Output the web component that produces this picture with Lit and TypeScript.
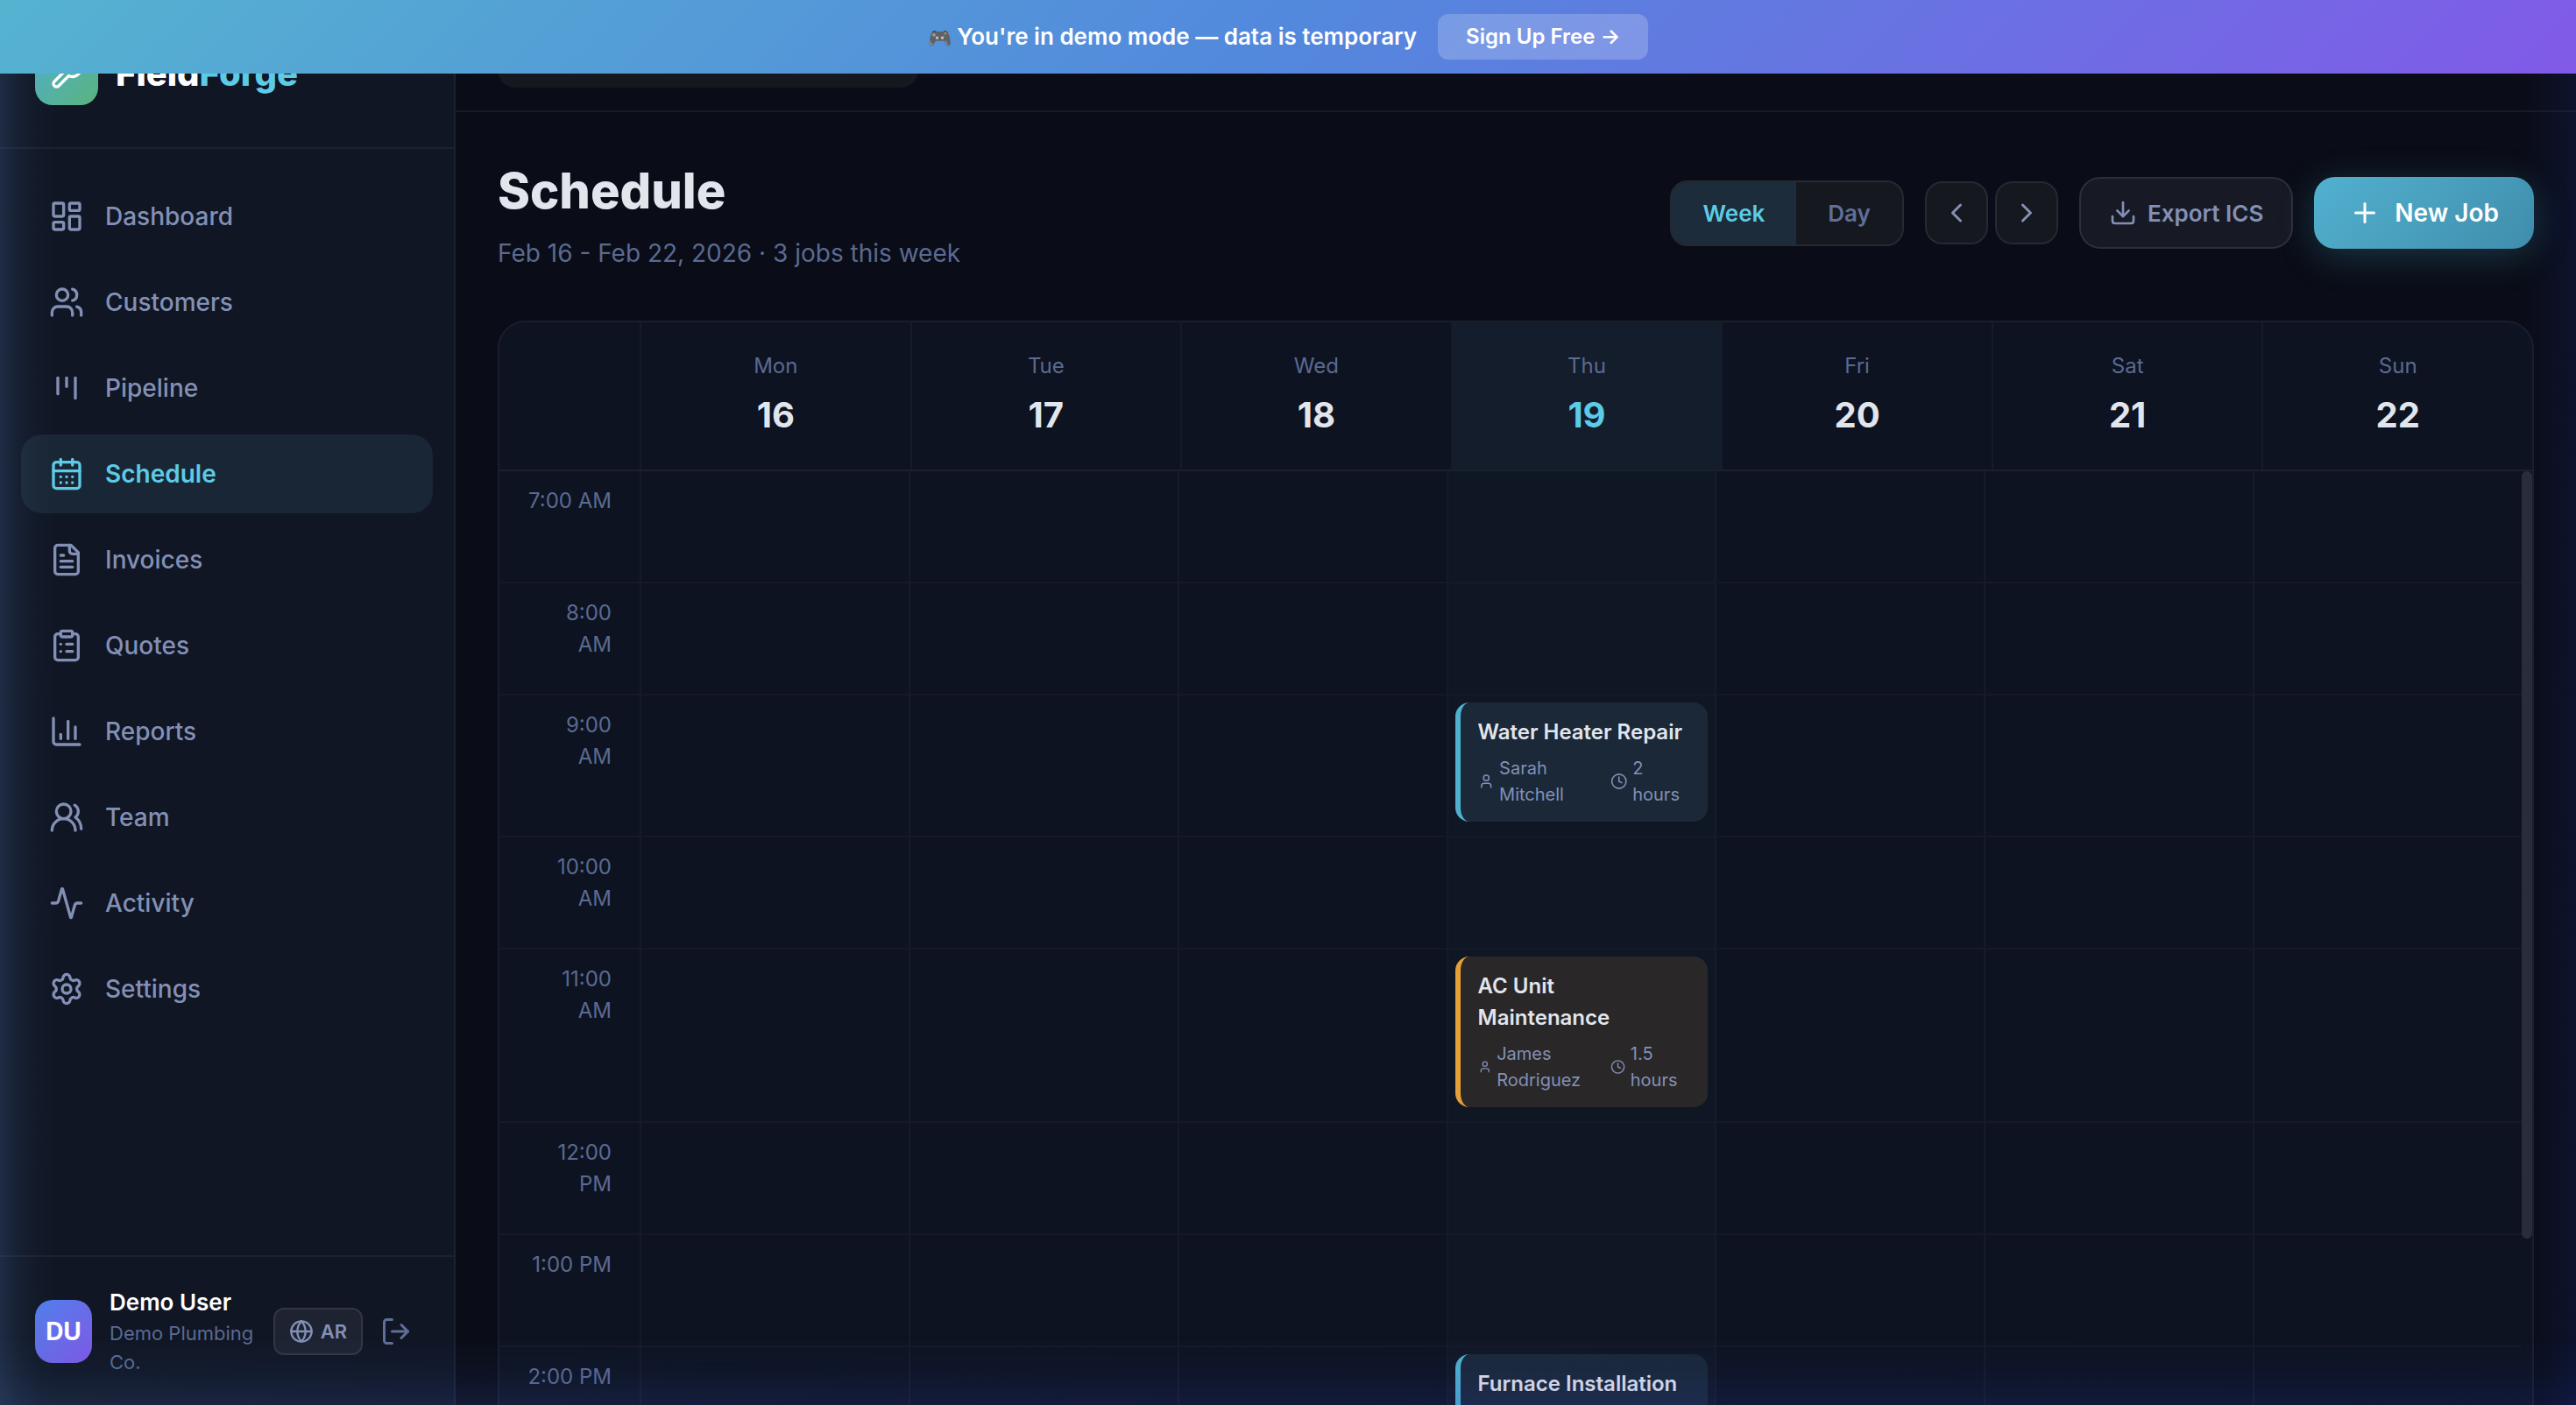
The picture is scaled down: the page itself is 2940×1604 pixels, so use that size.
import { LitElement, html, css, svg } from "lit";
import { customElement, property } from "lit/decorators.js";

const ICONS: Record<string, unknown> = {
  dashboard: svg`<rect width="7" height="9" x="3" y="3" rx="1"/><rect width="7" height="5" x="14" y="3" rx="1"/><rect width="7" height="9" x="14" y="12" rx="1"/><rect width="7" height="5" x="3" y="16" rx="1"/>`,
  customers: svg`<path d="M16 21v-2a4 4 0 0 0-4-4H6a4 4 0 0 0-4 4v2"/><circle cx="9" cy="7" r="4"/><path d="M22 21v-2a4 4 0 0 0-3-3.87"/><path d="M16 3.13a4 4 0 0 1 0 7.75"/>`,
  pipeline: svg`<path d="M6 5v11"/><path d="M12 5v6"/><path d="M18 5v14"/>`,
  schedule: svg`<rect width="18" height="18" x="3" y="4" rx="2"/><path d="M16 2v4"/><path d="M8 2v4"/><path d="M3 10h18"/><path d="M8 14h.01"/><path d="M12 14h.01"/><path d="M16 14h.01"/><path d="M8 18h.01"/><path d="M12 18h.01"/><path d="M16 18h.01"/>`,
  invoices: svg`<path d="M15 2H6a2 2 0 0 0-2 2v16a2 2 0 0 0 2 2h12a2 2 0 0 0 2-2V7Z"/><path d="M14 2v4a2 2 0 0 0 2 2h4"/><path d="M10 9H8"/><path d="M16 13H8"/><path d="M16 17H8"/>`,
  quotes: svg`<rect width="8" height="4" x="8" y="2" rx="1"/><path d="M16 4h2a2 2 0 0 1 2 2v14a2 2 0 0 1-2 2H6a2 2 0 0 1-2-2V6a2 2 0 0 1 2-2h2"/><path d="M12 11h4"/><path d="M12 16h4"/><path d="M8 11h.01"/><path d="M8 16h.01"/>`,
  reports: svg`<path d="M3 3v16a2 2 0 0 0 2 2h16"/><path d="M18 17V9"/><path d="M13 17V5"/><path d="M8 17v-3"/>`,
  team: svg`<path d="M18 21a8 8 0 0 0-16 0"/><circle cx="10" cy="8" r="5"/><path d="M22 20c0-3.37-2-6.5-4-8a5 5 0 0 0-.45-8.3"/>`,
  activity: svg`<path d="M22 12h-2.48a2 2 0 0 0-1.93 1.46l-2.35 8.36a.25.25 0 0 1-.48 0L9.24 2.18a.25.25 0 0 0-.48 0l-2.35 8.36A2 2 0 0 1 4.49 12H2"/>`,
  settings: svg`<path d="M9.671 4.136a2.34 2.34 0 0 1 4.659 0 2.34 2.34 0 0 0 3.319 1.915 2.34 2.34 0 0 1 2.33 4.033 2.34 2.34 0 0 0 0 3.831 2.34 2.34 0 0 1-2.33 4.033 2.34 2.34 0 0 0-3.319 1.915 2.34 2.34 0 0 1-4.659 0 2.34 2.34 0 0 0-3.32-1.915 2.34 2.34 0 0 1-2.33-4.033 2.34 2.34 0 0 0 0-3.831A2.34 2.34 0 0 1 6.35 6.051a2.34 2.34 0 0 0 3.319-1.915"/><circle cx="12" cy="12" r="3"/>`,
  wrench: svg`<path d="M14.7 6.3a1 1 0 0 0 0 1.4l1.6 1.6a1 1 0 0 0 1.4 0l3.77-3.77a6 6 0 0 1-7.94 7.94l-6.91 6.91a2.12 2.12 0 0 1-3-3l6.91-6.91a6 6 0 0 1 7.94-7.94l-3.76 3.76z"/>`,
  globe: svg`<circle cx="12" cy="12" r="10"/><path d="M12 2a14.5 14.5 0 0 0 0 20 14.5 14.5 0 0 0 0-20"/><path d="M2 12h20"/>`,
  logout: svg`<path d="m16 17 5-5-5-5"/><path d="M21 12H9"/><path d="M9 21H5a2 2 0 0 1-2-2V5a2 2 0 0 1 2-2h4"/>`,
  left: svg`<path d="m15 18-6-6 6-6"/>`,
  right: svg`<path d="m9 18 6-6-6-6"/>`,
  download: svg`<path d="M21 15v4a2 2 0 0 1-2 2H5a2 2 0 0 1-2-2v-4"/><path d="m7 10 5 5 5-5"/><path d="M12 15V3"/>`,
  plus: svg`<path d="M5 12h14"/><path d="M12 5v14"/>`,
  user: svg`<path d="M19 21v-2a4 4 0 0 0-4-4H9a4 4 0 0 0-4 4v2"/><circle cx="12" cy="7" r="4"/>`,
  clock: svg`<circle cx="12" cy="12" r="10"/><path d="M12 6v6l4 2"/>`,
};

const icon = (name: string) => html`<svg
  class="icon"
  viewBox="0 0 24 24"
  fill="none"
  stroke="currentColor"
  stroke-width="2"
  stroke-linecap="round"
  stroke-linejoin="round"
  aria-hidden="true"
>${ICONS[name]}</svg>`;

const base = css`
  * {
    box-sizing: border-box;
  }
  button {
    font: inherit;
    color: inherit;
    background: none;
    border: 0;
    margin: 0;
    padding: 0;
    cursor: pointer;
  }
  a {
    color: inherit;
    text-decoration: none;
  }
  .icon {
    display: block;
    width: 1em;
    height: 1em;
  }
`;

interface Job {
  title: string;
  customer?: string;
  duration?: string;
  tone: "cyan" | "amber";
}

const DAYS = [
  ["Mon", 16],
  ["Tue", 17],
  ["Wed", 18],
  ["Thu", 19],
  ["Fri", 20],
  ["Sat", 21],
  ["Sun", 22],
] as const;
const TODAY = 3;
const HOURS = ["7:00 AM", "8:00 AM", "9:00 AM", "10:00 AM", "11:00 AM", "12:00 PM", "1:00 PM", "2:00 PM"];
const JOBS: Record<string, Job> = {
  "9:00 AM": { title: "Water Heater Repair", customer: "Sarah Mitchell", duration: "2 hours", tone: "cyan" },
  "11:00 AM": { title: "AC Unit Maintenance", customer: "James Rodriguez", duration: "1.5 hours", tone: "amber" },
  "2:00 PM": { title: "Furnace Installation", tone: "cyan" },
};

@customElement("demo-banner")
class DemoBanner extends LitElement {
  static styles = [
    base,
    css`
      :host {
        display: flex;
        align-items: center;
        justify-content: center;
        gap: 24px;
        padding: 16px;
        background: linear-gradient(135deg, #55b3d0 0%, #5388dd 50%, #815ae8 100%);
        color: #fff;
        font-size: 26px;
        font-weight: 600;
        line-height: 39px;
      }
      .emoji {
        font-size: 22px;
      }
      .signup {
        display: block;
        padding: 7px 32px;
        border-radius: 12px;
        background: rgba(255, 255, 255, 0.2);
        font-size: 24px;
        line-height: 38px;
      }
    `,
  ];
  render() {
    return html`<span><span class="emoji">🎮</span> You're in demo mode — data is temporary</span>
      <button class="signup">Sign Up Free →</button>`;
  }
}

@customElement("side-nav")
class SideNav extends LitElement {
  static styles = [
    base,
    css`
      :host {
        display: flex;
        flex-direction: column;
        width: 520px;
        flex: none;
        background: #101624;
        border-right: 2px solid #1b2130;
      }
      .brand {
        display: flex;
        align-items: center;
        gap: 20px;
        padding: 48px 40px;
        border-bottom: 2px solid #1b2130;
        color: #fff;
        font-size: 40px;
        line-height: 60px;
        font-weight: 800;
      }
      .mark {
        display: grid;
        place-items: center;
        width: 72px;
        height: 72px;
        border-radius: 20px;
        background: linear-gradient(135deg, #4fb0cd, #5ab37d);
        font-size: 40px;
      }
      .accent {
        color: #5ccbe6;
      }
      nav {
        display: flex;
        flex-direction: column;
        gap: 8px;
        padding: 32px 24px;
        flex: 1;
      }
      .item {
        display: flex;
        align-items: center;
        gap: 24px;
        padding: 24px 32px;
        border-radius: 24px;
        color: #8390b5;
        font-size: 28px;
        line-height: 42px;
        font-weight: 500;
      }
      .item .icon {
        font-size: 40px;
      }
      .active {
        background: #192635;
        color: #5ccbe6;
        font-weight: 600;
      }
      .account {
        display: flex;
        align-items: center;
        padding: 32px 32px 32px 40px;
        border-top: 2px solid #1b2130;
      }
      .avatar {
        display: grid;
        place-items: center;
        width: 65px;
        height: 72px;
        margin-right: 20px;
        border-radius: 20px;
        background: linear-gradient(135deg, #4f80ec, #8059e6);
        color: #fff;
        font-size: 28px;
        font-weight: 700;
      }
      .who {
        flex: 1;
        font-size: 22px;
        line-height: 33px;
        color: #5a6a92;
      }
      .name {
        color: #fff;
        font-size: 26px;
        line-height: 39px;
        font-weight: 600;
      }
      .lang {
        display: flex;
        align-items: center;
        gap: 8px;
        height: 54px;
        padding: 0 16px;
        border: 2px solid #313642;
        border-radius: 12px;
        background: #1d2331;
        color: #8390b5;
        font-size: 22px;
        font-weight: 600;
      }
      .lang .icon {
        font-size: 28px;
      }
      .logout {
        padding: 16px;
        margin-left: 4px;
        color: #5f6f98;
        font-size: 36px;
      }
    `,
  ];
  render() {
    const items = [
      ["dashboard", "Dashboard"],
      ["customers", "Customers"],
      ["pipeline", "Pipeline"],
      ["schedule", "Schedule"],
      ["invoices", "Invoices"],
      ["quotes", "Quotes"],
      ["reports", "Reports"],
      ["team", "Team"],
      ["activity", "Activity"],
      ["settings", "Settings"],
    ];
    return html`
      <div class="brand">
        <span class="mark">${icon("wrench")}</span>
        <span>Field<span class="accent">Forge</span></span>
      </div>
      <nav>
        ${items.map(
          ([key, label]) =>
            html`<a class="item ${key === "schedule" ? "active" : ""}" href="#${key}">${icon(key)}<span>${label}</span></a>`
        )}
      </nav>
      <div class="account">
        <span class="avatar">DU</span>
        <div class="who">
          <div class="name">Demo User</div>
          <div>Demo Plumbing Co.</div>
        </div>
        <button class="lang">${icon("globe")}AR</button>
        <button class="logout" aria-label="Log out">${icon("logout")}</button>
      </div>
    `;
  }
}

@customElement("job-card")
class JobCard extends LitElement {
  @property({ attribute: false }) job!: Job;
  static styles = [
    base,
    css`
      :host {
        display: block;
        margin-bottom: 8px;
      }
      .card {
        padding: 16px 20px;
        border-left: 6px solid #50b0cf;
        border-radius: 16px;
        background: #1a2838;
      }
      .amber {
        border-left-color: #e69f37;
        background: #292728;
      }
      .title {
        margin-bottom: 8px;
        color: #e1e5ec;
        font-size: 24px;
        line-height: 36px;
        font-weight: 600;
      }
      .meta {
        display: flex;
        gap: 23px;
        padding-right: 8px;
        color: #8390b5;
        font-size: 20px;
        line-height: 30px;
      }
      .part {
        display: flex;
        align-items: center;
        gap: 6px;
      }
      .part .icon {
        width: 24px;
        height: 24px;
        min-width: 0;
      }
    `,
  ];
  render() {
    const { title, customer, duration, tone } = this.job;
    return html`<div class="card ${tone}">
      <div class="title">${title}</div>
      ${customer
        ? html`<div class="meta">
            <div class="part">${icon("user")}<span>${customer}</span></div>
            <div class="part">${icon("clock")}<span>${duration}</span></div>
          </div>`
        : ""}
    </div>`;
  }
}

@customElement("week-calendar")
class WeekCalendar extends LitElement {
  static styles = [
    base,
    css`
      :host {
        display: flex;
        flex-direction: column;
        border: 2px solid #1a1e2c;
        border-radius: 32px;
        overflow: hidden;
        background: #0d1320;
      }
      .days,
      .row {
        display: grid;
        grid-template-columns: 160px repeat(7, minmax(0, 1fr));
      }
      .days {
        border-bottom: 2px solid #1c202d;
      }
      .day {
        padding: 32px 16px;
        border-left: 2px solid #161b28;
        text-align: center;
        color: #5a6a92;
        font-size: 24px;
        line-height: 36px;
      }
      .num {
        margin-top: 8px;
        color: #e1e5ec;
        font-size: 40px;
        line-height: 60px;
        font-weight: 700;
      }
      .day.today {
        background: #131d2b;
      }
      .today .num {
        color: #5ccbe6;
      }
      .body {
        display: flex;
        align-items: flex-start;
      }
      .rows {
        flex: 1;
      }
      .thumb {
        width: 12px;
        height: 876px;
        border-radius: 6px;
        background: #292d39;
      }
      .row {
        min-height: 128px;
        border-bottom: 2px solid #161926;
      }
      .time {
        padding: 16px 32px 0;
        text-align: right;
        color: #5a6a92;
        font-size: 24px;
        line-height: 36px;
      }
      .cell {
        padding: 8px;
        border-left: 2px solid #161b28;
      }
      .cell.today {
        background: #101724;
      }
    `,
  ];
  render() {
    return html`
      <div class="days">
        <div></div>
        ${DAYS.map(
          ([name, num], i) =>
            html`<div class="day ${i === TODAY ? "today" : ""}">${name}<div class="num">${num}</div></div>`
        )}
      </div>
      <div class="body">
        <div class="rows">
          ${HOURS.map(
            (hour) => html`<div class="row">
              <div class="time">${hour}</div>
              ${DAYS.map(
                (_, i) => html`<div class="cell ${i === TODAY ? "today" : ""}">
                  ${i === TODAY && JOBS[hour] ? html`<job-card .job=${JOBS[hour]}></job-card>` : ""}
                </div>`
              )}
            </div>`
          )}
        </div>
        <div class="thumb"></div>
      </div>
    `;
  }
}

@customElement("app-root")
class AppRoot extends LitElement {
  static styles = [
    base,
    css`
      :host {
        display: flex;
        position: relative;
        height: 100vh;
        overflow: hidden;
        background: #0a0d17;
        color: #e1e5ec;
        font-family: Inter, "Liberation Sans", sans-serif;
      }
      demo-banner {
        position: absolute;
        top: 0;
        left: 0;
        right: 0;
        z-index: 2;
      }
      .glow {
        position: absolute;
        inset: 0;
        z-index: 1;
        pointer-events: none;
        background:
          linear-gradient(
            to right,
            rgba(75, 110, 165, 0.24),
            rgba(75, 110, 165, 0.1) 24px,
            rgba(75, 110, 165, 0.03) 44px,
            transparent 64px
          ),
          linear-gradient(
            to left,
            rgba(30, 56, 180, 0.14),
            rgba(30, 56, 180, 0.08) 24px,
            rgba(30, 56, 180, 0.03) 44px,
            transparent 60px
          );
      }
      .glow::after {
        content: "";
        position: absolute;
        left: 0;
        right: 0;
        bottom: 0;
        height: 80px;
        background: linear-gradient(to right, rgba(65, 100, 165, 0.22), rgba(50, 66, 190, 0.18) 35%, rgba(34, 58, 180, 0.16));
        mask-image: linear-gradient(to top, #000, rgba(0, 0, 0, 0.4) 36px, transparent);
      }
      .content {
        flex: 1;
        min-width: 0;
      }
      .topbar {
        padding: 28px 48px 26px;
        border-bottom: 2px solid #161a26;
      }
      .search {
        display: block;
        width: 480px;
        height: 72px;
        padding: 0 24px;
        border: 0;
        border-radius: 20px;
        background: #15181f;
        color: #e1e5ec;
        font: inherit;
      }
      main {
        padding: 48px;
      }
      .head {
        display: flex;
        align-items: center;
        justify-content: space-between;
        margin-bottom: 56px;
      }
      h1 {
        margin: 0 0 8px;
        font-size: 56px;
        line-height: 84px;
        font-weight: 800;
      }
      .range {
        margin: 0;
        color: #5a6a92;
        font-size: 28px;
        line-height: 42px;
      }
      .actions {
        display: flex;
        align-items: center;
        gap: 24px;
        font-size: 26px;
        line-height: 39px;
        font-weight: 600;
      }
      .toggle {
        display: flex;
        border: 2px solid #262932;
        border-radius: 20px;
        overflow: hidden;
        background: #15181f;
        color: #5f6f98;
      }
      .toggle button {
        padding: 16px 36px;
      }
      .toggle .on {
        background: #1d2c3a;
        color: #5ccbe6;
      }
      .pager {
        display: flex;
        gap: 8px;
      }
      .step {
        display: grid;
        place-items: center;
        width: 72px;
        height: 72px;
        border: 2px solid #262932;
        border-radius: 20px;
        background: #15181f;
        color: #8390b5;
        font-size: 36px;
      }
      .export,
      .create {
        display: flex;
        align-items: center;
        height: 82px;
        border-radius: 24px;
      }
      .export {
        gap: 12px;
        padding: 0 32px;
        border: 2px solid #2c2f3a;
        background: #171a24;
        color: #8390b5;
      }
      .export .icon {
        font-size: 32px;
      }
      .create {
        gap: 16px;
        padding: 0 40px;
        background: linear-gradient(135deg, #52b1cf, #408dad);
        box-shadow: 0 8px 40px rgba(80, 176, 207, 0.25);
        color: #fff;
        font-size: 28px;
      }
      .create .icon {
        font-size: 36px;
      }
    `,
  ];
  render() {
    return html`
      <demo-banner></demo-banner>
      <side-nav></side-nav>
      <div class="content">
        <header class="topbar"><input class="search" type="search" aria-label="Search" /></header>
        <main>
          <div class="head">
            <div>
              <h1>Schedule</h1>
              <p class="range">Feb 16 - Feb 22, 2026 · 3 jobs this week</p>
            </div>
            <div class="actions">
              <div class="toggle"><button class="on">Week</button><button>Day</button></div>
              <div class="pager">
                <button class="step" aria-label="Previous week">${icon("left")}</button>
                <button class="step" aria-label="Next week">${icon("right")}</button>
              </div>
              <button class="export">${icon("download")}Export ICS</button>
              <button class="create">${icon("plus")}New Job</button>
            </div>
          </div>
          <week-calendar></week-calendar>
        </main>
      </div>
      <div class="glow"></div>
    `;
  }
}
